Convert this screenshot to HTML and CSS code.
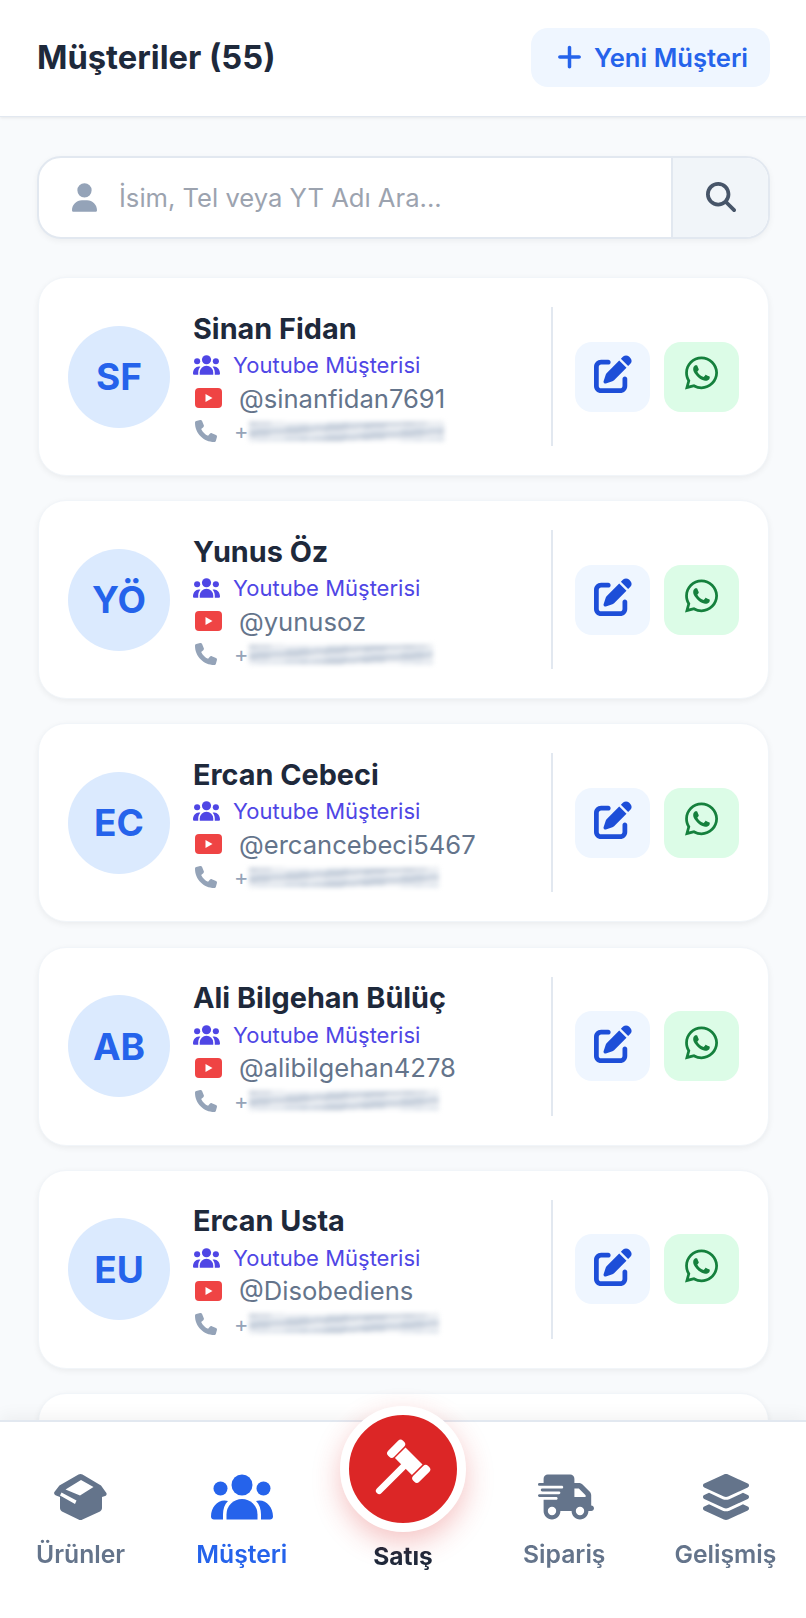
FILE: index.html
```html
<!DOCTYPE html>
<html lang="tr">
<head>
  <meta charset="UTF-8">
  <meta name="viewport" content="width=device-width, initial-scale=1.0">
  <title>Müşteriler</title>
  <link rel="stylesheet" href="styles.css">
</head>
<body>
  <!-- Icon set -->
  <svg class="icon-defs" aria-hidden="true">
    <symbol id="i-plus" viewBox="0 0 448 512"><path d="M256 80c0-17.700-14.300-32-32-32s-32 14.300-32 32V224H48c-17.700 0-32 14.300-32 32s14.300 32 32 32H192V432c0 17.700 14.300 32 32 32s32-14.300 32-32V288H400c17.700 0 32-14.300 32-32s-14.300-32-32-32H256V80z"/></symbol>
    <symbol id="i-user" viewBox="0 0 448 512"><path d="M224 256A128 128 0 1 0 224 0a128 128 0 1 0 0 256zm-45.700 48C79.800 304 0 383.800 0 482.300C0 498.700 13.300 512 29.700 512H418.300c16.400 0 29.700-13.300 29.700-29.700C448 383.800 368.200 304 269.700 304H178.300z"/></symbol>
    <symbol id="i-search" viewBox="0 0 512 512"><path d="M416 208c0 45.900-14.900 88.300-40 122.700L502.600 457.400c12.500 12.500 12.500 32.800 0 45.300s-32.800 12.500-45.300 0L330.700 376c-34.400 25.200-76.800 40-122.700 40C93.100 416 0 322.900 0 208S93.100 0 208 0S416 93.100 416 208zM208 352a144 144 0 1 0 0-288 144 144 0 1 0 0 288z"/></symbol>
    <symbol id="i-group" viewBox="0 0 62 45">
      <circle cx="31" cy="10.500" r="10.500"/>
      <circle cx="9.500" cy="14" r="7"/>
      <circle cx="52.500" cy="14" r="7"/>
      <path d="M15.500 45V40a15.500 15.500 0 0 1 31 0v5z"/>
      <path d="M0 42C0 33 6 26 13.500 26c1.300 0 2.500.2 3.500.6C13.500 30 12 35 12 40v5H3c-1.700 0-3-1.300-3-3z"/>
      <path d="M62 42c0-9-6-16-13.500-16-1.300 0-2.500.2-3.500.6C48.500 30 50 35 50 40v5h9c1.700 0 3-1.300 3-3z"/>
    </symbol>
    <symbol id="i-phone" viewBox="0 0 512 512"><path d="M164.900 24.600c-7.700-18.600-28-28.500-47.400-23.200l-88 24C12.100 30.200 0 46 0 64C0 311.400 200.600 512 448 512c18 0 33.800-12.100 38.600-29.500l24-88c5.300-19.400-4.600-39.700-23.200-47.400l-96-40c-16.300-6.800-35.200-2.100-46.300 11.600L304.700 368C234.300 334.700 177.300 277.700 144 207.300L193.300 167c13.700-11.200 18.400-30 11.600-46.300l-40-96z"/></symbol>
    <symbol id="i-youtube" viewBox="0 0 27 20">
      <rect width="27" height="20" rx="4" fill="#ef4444"/>
      <path d="M10.500 6l7 4-7 4z" fill="#fff"/>
    </symbol>
    <symbol id="i-edit" viewBox="0 0 512 512"><path d="M471.600 21.700c-21.900-21.900-57.300-21.900-79.200 0L362.300 51.700l97.900 97.900 30.100-30.100c21.900-21.900 21.900-57.300 0-79.200L471.600 21.700zm-299.200 220c-6.100 6.100-10.800 13.600-13.500 21.900l-29.600 88.800c-2.900 8.600-.6 18.100 5.800 24.600s15.900 8.700 24.600 5.800l88.800-29.600c8.200-2.700 15.700-7.400 21.900-13.500L437.700 172.300 339.700 74.300 172.400 241.700zM96 64C43 64 0 107 0 160V416c0 53 43 96 96 96H352c53 0 96-43 96-96V320c0-17.700-14.300-32-32-32s-32 14.300-32 32v96c0 17.700-14.300 32-32 32H96c-17.700 0-32-14.300-32-32V160c0-17.700 14.300-32 32-32h96c17.700 0 32-14.300 32-32s-14.300-32-32-32H96z"/></symbol>
    <symbol id="i-whatsapp" viewBox="0 0 448 512"><path d="M380.900 97.100C339 55.100 283.200 32 223.900 32c-122.400 0-222 99.600-222 222 0 39.100 10.200 77.300 29.600 111L0 480l117.700-30.900c32.400 17.700 68.900 27 106.100 27h.1c122.300 0 224.100-99.600 224.100-222 0-59.300-25.200-115-67.100-157zm-157 341.600c-33.200 0-65.700-8.900-94-25.700l-6.700-4-69.800 18.300L72 359.200l-4.400-7c-18.500-29.400-28.200-63.300-28.200-98.200 0-101.700 82.800-184.500 184.600-184.500 49.300 0 95.600 19.200 130.400 54.100 34.800 34.900 56.200 81.200 56.100 130.500 0 101.800-84.900 184.600-186.600 184.600zm101.200-138.200c-5.500-2.800-32.800-16.200-37.900-18-5.100-1.900-8.800-2.800-12.500 2.800-3.700 5.600-14.300 18-17.600 21.800-3.200 3.700-6.500 4.200-12 1.400-32.600-16.300-54-29.100-75.500-66-5.700-9.800 5.700-9.100 16.300-30.300 1.800-3.700.9-6.900-.5-9.700-1.400-2.800-12.500-30.100-17.100-41.200-4.500-10.800-9.100-9.300-12.500-9.500-3.200-.2-6.900-.2-10.600-.2-3.700 0-9.700 1.400-14.800 6.900-5.100 5.600-19.400 19-19.400 46.300 0 27.300 19.900 53.700 22.600 57.400 2.800 3.700 39.100 59.700 94.800 83.800 35.200 15.200 49 16.500 66.600 13.900 10.700-1.600 32.800-13.400 37.400-26.400 4.600-13 4.600-24.100 3.200-26.400-1.300-2.500-5-3.900-10.500-6.600z"/></symbol>
    <symbol id="i-box" viewBox="0 0 53 46">
      <path fill-rule="evenodd" d="M24.500.6c1.200-.7 2.800-.7 4 0l18.500 11 5.400 7.500c.6 1-.1 2.400-1.300 2.900l-3.100 1V34c0 1.400-.8 2.700-2 3.400L28.500 45.400c-1.200.7-2.800.7-4 0L8 37.400c-1.200-.7-2-2-2-3.400V23L2 21.500C.5 21-.4 19.300.4 18l5-6.500zM27 6L11.500 15.500 26 21.500 39.500 13zM7.500 18.500l-1.500 3 15 8.500 1.500-3.500z"/>
    </symbol>
    <symbol id="i-truck" viewBox="0 0 640 512"><path d="M112 0C85.500 0 64 21.500 64 48V96H16c-8.800 0-16 7.200-16 16s7.200 16 16 16H64 272c8.800 0 16 7.200 16 16s-7.200 16-16 16H64 48c-8.800 0-16 7.200-16 16s7.200 16 16 16H64 240c8.800 0 16 7.200 16 16s-7.200 16-16 16H64 16c-8.800 0-16 7.200-16 16s7.200 16 16 16H64 208c8.800 0 16 7.200 16 16s-7.200 16-16 16H64V416c0 53 43 96 96 96s96-43 96-96H384c0 53 43 96 96 96s96-43 96-96h32c17.700 0 32-14.300 32-32s-14.300-32-32-32V288 256 237.300c0-17-6.700-33.300-18.700-45.300L512 114.700c-12-12-28.300-18.700-45.300-18.700H416V48c0-26.500-21.500-48-48-48H112zM544 237.300V256H416V160h50.700L544 237.300zM160 368a48 48 0 1 1 0 96 48 48 0 1 1 0-96zm272 48a48 48 0 1 1 96 0 48 48 0 1 1 -96 0z"/></symbol>
    <symbol id="i-layers" viewBox="0 0 576 512"><path d="M264.500 5.200c14.900-6.900 32.100-6.900 47 0l218.600 101c8.500 3.900 13.900 12.400 13.900 21.800s-5.400 17.900-13.900 21.800l-218.600 101c-14.900 6.900-32.100 6.900-47 0L45.900 149.800C37.400 145.800 32 137.300 32 128s5.400-17.900 13.900-21.800L264.500 5.200zM476.900 209.600l53.200 24.600c8.500 3.900 13.900 12.400 13.900 21.800s-5.400 17.900-13.900 21.800l-218.600 101c-14.900 6.900-32.100 6.900-47 0L45.900 277.800C37.400 273.800 32 265.300 32 256s5.400-17.900 13.900-21.800l53.200-24.600 152 70.200c23.400 10.800 50.400 10.800 73.800 0l152-70.200zm-152 198.200l152-70.200 53.200 24.600c8.500 3.900 13.900 12.400 13.900 21.800s-5.400 17.900-13.900 21.800l-218.600 101c-14.900 6.900-32.100 6.900-47 0L45.900 405.800C37.400 401.800 32 393.300 32 384s5.400-17.900 13.900-21.800l53.200-24.600 152 70.200c23.400 10.800 50.400 10.800 73.800 0z"/></symbol>
    <symbol id="i-gavel" viewBox="0 0 64 64">
      <g transform="translate(37.700 24.300) rotate(45)">
        <rect x="-3.300" y="0" width="6.600" height="45" rx="3.300"/>
        <rect x="-12" y="-7.500" width="24" height="15"/>
        <rect x="-22" y="-10.500" width="8.500" height="21" rx="3.500"/>
        <rect x="13.500" y="-10.500" width="8.500" height="21" rx="3.500"/>
      </g>
    </symbol>
  </svg>

  <header class="top-bar">
    <h1 class="page-title">Müşteriler (55)</h1>
    <button class="new-btn">
      <svg class="new-btn-icon"><use href="#i-plus"/></svg>
      Yeni Müşteri
    </button>
  </header>

  <main class="content">
    <form class="search-box">
      <svg class="search-user"><use href="#i-user"/></svg>
      <input class="search-input" type="text" placeholder="İsim, Tel veya YT Adı Ara...">
      <button class="search-btn" type="button"><svg class="search-icon"><use href="#i-search"/></svg></button>
    </form>

    <div class="customer-list">
      <article class="card">
        <div class="avatar">SF</div>
        <div class="info">
          <h2 class="name">Sinan Fidan</h2>
          <p class="row row-type"><svg class="row-icon group-icon"><use href="#i-group"/></svg>Youtube Müşterisi</p>
          <p class="row row-handle"><svg class="row-icon yt-icon"><use href="#i-youtube"/></svg>@sinanfidan7691</p>
          <p class="row row-phone"><svg class="row-icon phone-icon"><use href="#i-phone"/></svg>+<span class="blurred len-195"></span></p>
        </div>
        <div class="actions">
          <button class="action-btn edit-btn"><svg class="edit-icon"><use href="#i-edit"/></svg></button>
          <button class="action-btn wa-btn"><svg class="wa-icon"><use href="#i-whatsapp"/></svg></button>
        </div>
      </article>

      <article class="card">
        <div class="avatar">YÖ</div>
        <div class="info">
          <h2 class="name">Yunus Öz</h2>
          <p class="row row-type"><svg class="row-icon group-icon"><use href="#i-group"/></svg>Youtube Müşterisi</p>
          <p class="row row-handle"><svg class="row-icon yt-icon"><use href="#i-youtube"/></svg>@yunusoz</p>
          <p class="row row-phone"><svg class="row-icon phone-icon"><use href="#i-phone"/></svg>+<span class="blurred len-184"></span></p>
        </div>
        <div class="actions">
          <button class="action-btn edit-btn"><svg class="edit-icon"><use href="#i-edit"/></svg></button>
          <button class="action-btn wa-btn"><svg class="wa-icon"><use href="#i-whatsapp"/></svg></button>
        </div>
      </article>

      <article class="card">
        <div class="avatar">EC</div>
        <div class="info">
          <h2 class="name">Ercan Cebeci</h2>
          <p class="row row-type"><svg class="row-icon group-icon"><use href="#i-group"/></svg>Youtube Müşterisi</p>
          <p class="row row-handle"><svg class="row-icon yt-icon"><use href="#i-youtube"/></svg>@ercancebeci5467</p>
          <p class="row row-phone"><svg class="row-icon phone-icon"><use href="#i-phone"/></svg>+<span class="blurred len-190"></span></p>
        </div>
        <div class="actions">
          <button class="action-btn edit-btn"><svg class="edit-icon"><use href="#i-edit"/></svg></button>
          <button class="action-btn wa-btn"><svg class="wa-icon"><use href="#i-whatsapp"/></svg></button>
        </div>
      </article>

      <article class="card">
        <div class="avatar">AB</div>
        <div class="info">
          <h2 class="name">Ali Bilgehan Bülüç</h2>
          <p class="row row-type"><svg class="row-icon group-icon"><use href="#i-group"/></svg>Youtube Müşterisi</p>
          <p class="row row-handle"><svg class="row-icon yt-icon"><use href="#i-youtube"/></svg>@alibilgehan4278</p>
          <p class="row row-phone"><svg class="row-icon phone-icon"><use href="#i-phone"/></svg>+<span class="blurred len-190"></span></p>
        </div>
        <div class="actions">
          <button class="action-btn edit-btn"><svg class="edit-icon"><use href="#i-edit"/></svg></button>
          <button class="action-btn wa-btn"><svg class="wa-icon"><use href="#i-whatsapp"/></svg></button>
        </div>
      </article>

      <article class="card">
        <div class="avatar">EU</div>
        <div class="info">
          <h2 class="name">Ercan Usta</h2>
          <p class="row row-type"><svg class="row-icon group-icon"><use href="#i-group"/></svg>Youtube Müşterisi</p>
          <p class="row row-handle"><svg class="row-icon yt-icon"><use href="#i-youtube"/></svg>@Disobediens</p>
          <p class="row row-phone"><svg class="row-icon phone-icon"><use href="#i-phone"/></svg>+<span class="blurred len-190"></span></p>
        </div>
        <div class="actions">
          <button class="action-btn edit-btn"><svg class="edit-icon"><use href="#i-edit"/></svg></button>
          <button class="action-btn wa-btn"><svg class="wa-icon"><use href="#i-whatsapp"/></svg></button>
        </div>
      </article>

      <!-- Next card is cut off by the bottom nav -->
      <article class="card"></article>
    </div>
  </main>

  <nav class="bottom-nav">
    <a class="nav-item">
      <svg class="nav-icon box-icon"><use href="#i-box"/></svg>
      <span class="nav-label">Ürünler</span>
    </a>
    <a class="nav-item active">
      <svg class="nav-icon users-icon"><use href="#i-group"/></svg>
      <span class="nav-label">Müşteri</span>
    </a>
    <a class="nav-item sale-item">
      <span class="sale-btn"><svg class="gavel-icon"><use href="#i-gavel"/></svg></span>
      <span class="nav-label">Satış</span>
    </a>
    <a class="nav-item">
      <svg class="nav-icon truck-icon"><use href="#i-truck"/></svg>
      <span class="nav-label">Sipariş</span>
    </a>
    <a class="nav-item">
      <svg class="nav-icon layers-icon"><use href="#i-layers"/></svg>
      <span class="nav-label">Gelişmiş</span>
    </a>
  </nav>
</body>
</html>
```

FILE: styles.css
```css
/* Reset default styles */
* {
  margin: 0;
  padding: 0;
  box-sizing: border-box;
}

body {
  font-family: 'Inter', 'Liberation Sans', sans-serif;
  background-color: #f8fafc;
  color: #1e293b;
  height: 1618px;
  overflow: hidden;
}

svg {
  fill: currentColor;
  display: block;
  flex-shrink: 0;
}

button {
  border: none;
  font-family: inherit;
  cursor: pointer;
}

.icon-defs {
  display: none;
}

/* Top bar */
.top-bar {
  display: flex;
  align-items: center;
  justify-content: space-between;
  height: 117px;
  padding: 0 36px 2px 37px;
  background: #fff;
  border-bottom: 1px solid #e2e8f0;
  box-shadow: 0 1px 3px rgba(0, 0, 0, 0.08);
}

.page-title {
  font-size: 32.700px;
  font-weight: 700;
  color: #1e293b;
}

.new-btn {
  display: flex;
  align-items: center;
  gap: 12px;
  width: 239px;
  height: 59px;
  padding-left: 26px;
  background: #eff6ff;
  border-radius: 17px;
  color: #2563eb;
  font-size: 25.600px;
  font-weight: 600;
}

.new-btn-icon {
  width: 25px;
  height: 28px;
}

/* Search */
.content {
  padding: 38.500px 36px 0 37px;
}

.search-box {
  display: flex;
  align-items: center;
  height: 83.500px;
  background: #fff;
  border: 2px solid #e2e8f0;
  border-radius: 24px;
  box-shadow: 0 2px 6px rgba(0, 0, 0, 0.05);
  overflow: hidden;
}

.search-user {
  width: 25px;
  height: 29px;
  margin-left: 33px;
  color: #94a3b8;
}

.search-input {
  flex: 1;
  min-width: 0;
  height: 100%;
  margin-left: 22px;
  border: none;
  outline: none;
  background: transparent;
  font-family: inherit;
  font-size: 25.600px;
}

.search-input::placeholder {
  color: #9ca3af;
  opacity: 1;
}

.search-btn {
  display: flex;
  align-items: center;
  justify-content: center;
  width: 97px;
  height: 100%;
  background: #f1f5f9;
  border-left: 2px solid #e2e8f0;
  color: #475569;
}

.search-icon {
  width: 30px;
  height: 30px;
}

/* Customer cards */
.customer-list {
  display: flex;
  flex-direction: column;
  gap: 24.200px;
  margin: 38px 1px 0;
}

.card {
  display: flex;
  align-items: center;
  flex-shrink: 0;
  height: 199px;
  padding: 0 29px 0 29px;
  background: #fff;
  border: 1px solid #f1f5f9;
  border-radius: 28px;
  box-shadow: 0 2px 6px rgba(0, 0, 0, 0.06);
}

.avatar {
  display: flex;
  align-items: center;
  justify-content: center;
  flex-shrink: 0;
  width: 102px;
  height: 102px;
  border-radius: 50%;
  background: #dbeafe;
  color: #2563eb;
  font-size: 37px;
  font-weight: 700;
}

.info {
  flex: 1;
  min-width: 0;
  margin-left: 23px;
  padding-top: 2px;
}

.name {
  font-size: 28.800px;
  font-weight: 700;
  line-height: 41px;
  color: #1e293b;
}

.row {
  display: flex;
  align-items: center;
  height: 33px;
  white-space: nowrap;
}

.row-type {
  font-size: 22px;
  color: #4f46e5;
}

.row-handle {
  font-size: 25.600px;
  color: #64748b;
}

.row-phone {
  font-size: 22px;
  color: #94a3b8;
}

.group-icon {
  width: 27px;
  height: 20px;
  margin-right: 13px;
}

.yt-icon {
  width: 27px;
  height: 20px;
  margin-left: 2px;
  margin-right: 17px;
}

.phone-icon {
  width: 22px;
  height: 22px;
  margin-left: 2px;
  margin-right: 17px;
}

/* Phone numbers are smudged out in the screenshot */
.blurred {
  display: block;
  height: 19px;
  background:
    repeating-linear-gradient(176deg, rgba(148, 163, 184, 0.4) 0 3px, rgba(255, 255, 255, 0.55) 3px 7px, rgba(203, 213, 225, 0.6) 7px 11px),
    repeating-linear-gradient(100deg, #d3dae4 0 22px, #e6eaf0 22px 38px);
  filter: blur(2.400px);
}

.len-184 { width: 184px; }
.len-190 { width: 190px; }
.len-195 { width: 195px; }

.actions {
  display: flex;
  align-items: center;
  gap: 14px;
  flex-shrink: 0;
  height: 139px;
  padding-left: 22px;
  border-left: 2px solid #e2e8f0;
}

.action-btn {
  display: flex;
  align-items: center;
  justify-content: center;
  width: 75px;
  height: 70px;
  border-radius: 17px;
}

.edit-btn {
  background: #eff6ff;
  color: #1d4ed8;
}

.wa-btn {
  background: #dcfce7;
  color: #15803d;
}

.edit-icon {
  width: 38px;
  height: 38px;
  margin-top: -5px;
}

.wa-icon {
  width: 33px;
  height: 38px;
  margin-top: -7px;
}

/* Bottom nav */
.bottom-nav {
  position: fixed;
  left: 0;
  right: 0;
  bottom: 0;
  display: flex;
  height: 198px;
  background: #fff;
  border-top: 2px solid #e2e8f0;
  box-shadow: 0 -4px 16px rgba(0, 0, 0, 0.05);
}

.nav-item {
  position: relative;
  display: flex;
  flex-direction: column;
  align-items: center;
  flex: 1;
  height: 100%;
  padding-top: 52px;
  color: #64748b;
}

.nav-item.active {
  color: #2563eb;
}

.nav-icon {
  height: 46px;
}

.box-icon { width: 53px; }
.users-icon { width: 62px; }
.truck-icon { width: 56px; margin-left: 3px; }
.layers-icon { width: 52px; margin-left: 2px; }

.nav-label {
  margin-top: 19px;
  font-size: 24.700px;
  font-weight: 600;
  line-height: 30px;
}

.sale-item {
  padding-top: 119px;
  color: #1e293b;
}

.sale-item .nav-label {
  margin-top: 0;
  font-weight: 700;
  font-size: 24.500px;
}

.sale-btn {
  position: absolute;
  top: -16px;
  left: 50%;
  display: flex;
  align-items: center;
  justify-content: center;
  width: 126px;
  height: 126px;
  margin-left: -63px;
  background: #dc2626;
  border: 9px solid #fff;
  border-radius: 50%;
  color: #fff;
  box-shadow: 0 10px 28px rgba(220, 38, 38, 0.28);
}

.gavel-icon {
  width: 64px;
  height: 64px;
}
```
